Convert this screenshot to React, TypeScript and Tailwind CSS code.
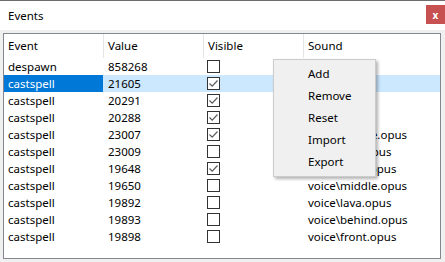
import React from 'react';

type Row = { event: string; value: string; visible: boolean; sound: string };

const rows: Row[] = [
  { event: 'despawn', value: '858268', visible: false, sound: '' },
  { event: 'castspell', value: '21605', visible: true, sound: '' },
  { event: 'castspell', value: '20291', visible: true, sound: '' },
  { event: 'castspell', value: '20288', visible: true, sound: '' },
  { event: 'castspell', value: '23007', visible: true, sound: 'voice\\middle.opus' },
  { event: 'castspell', value: '23009', visible: false, sound: 'voice\\lava.opus' },
  { event: 'castspell', value: '19648', visible: true, sound: 'voice\\front.opus' },
  { event: 'castspell', value: '19650', visible: false, sound: 'voice\\middle.opus' },
  { event: 'castspell', value: '19892', visible: false, sound: 'voice\\lava.opus' },
  { event: 'castspell', value: '19893', visible: false, sound: 'voice\\behind.opus' },
  { event: 'castspell', value: '19898', visible: false, sound: 'voice\\front.opus' },
];

const menuItems = ['Add', 'Remove', 'Reset', 'Import', 'Export'];

// Small Win10 style checkbox
const CheckBox: React.FC<{ checked: boolean }> = ({ checked }) => (
  <div className="w-[13px] h-[13px] border border-[#333333] bg-white flex items-center justify-center">
    {checked && (
      <svg width="11" height="11" viewBox="0 0 11 11">
        <path d="M1.5 5.5 L4.2 8.2 L9.5 2.5" fill="none" stroke="#5c5c5c" strokeWidth="1.2" />
      </svg>
    )}
  </div>
);

const App: React.FC = () => {
  return (
    <div
      className="relative w-[445px] h-[262px] bg-[#f0f0f0] border-t border-[#6d6d6d] overflow-hidden text-[11.5px] text-black"
      style={{ fontFamily: '"Noto Sans", "Liberation Sans", sans-serif' }}
    >
      {/* Title bar */}
      <div className="h-[29px] bg-white flex items-center justify-between">
        <span className="pl-[8px]">Events</span>
        <div className="w-[19px] h-[19px] mt-[-2px] bg-[#c75050] flex items-center justify-center text-white text-[10px] font-bold leading-none">
          x
        </div>
      </div>

      {/* List view */}
      <div className="mt-[3px] ml-[3px] w-[438px] h-[226px] bg-white border border-[#828790]">
        {/* Header */}
        <div className="flex h-[24px]">
          {['Event', 'Value', 'Visible'].map((h) => (
            <div key={h} className="w-[100px] h-full flex items-center pl-[4px] border-r border-[#e5e5e5]">
              {h}
            </div>
          ))}
          <div className="flex-1 h-full flex items-center pl-[4px]">Sound</div>
        </div>

        {/* Rows */}
        {rows.map((r, i) => {
          const selected = i === 1;
          return (
            <div key={r.value} className={`flex h-[17px] items-center ${selected ? 'bg-[#cce8ff]' : ''}`}>
              <div className={`w-[99px] h-full flex items-center pl-[4px] ${selected ? 'bg-[#0078d7] text-white' : ''}`}>
                {r.event}
              </div>
              <div className="w-[100px] pl-[5px]">{r.value}</div>
              <div className="w-[100px] pl-[4px]">
                <CheckBox checked={r.visible} />
              </div>
              <div className="w-[100px] pl-[5px] whitespace-nowrap">{r.sound}</div>
            </div>
          );
        })}
      </div>

      {/* Context menu */}
      <div className="absolute left-[273px] top-[58px] w-[103px] py-[3px] bg-[#f0f0f0] border border-[#cccccc] shadow-[2px_2px_3px_rgba(0,0,0,0.3)]">
        {menuItems.map((m) => (
          <div key={m} className="h-[22px] flex items-center pl-[34px]">
            {m}
          </div>
        ))}
      </div>
    </div>
  );
};

export default App;
